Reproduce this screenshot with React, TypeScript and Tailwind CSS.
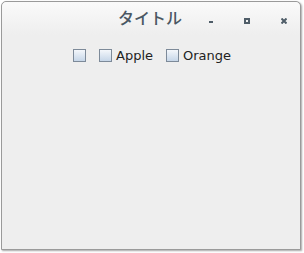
const ITEMS = ["", "Apple", "Orange"];

function Box({ label }: { label: string }) {
  return (
    <label className="flex items-center gap-[4px]">
      <span className="w-[13px] h-[13px] border border-[#7d8a99] bg-gradient-to-b from-[#f4f7fb] to-[#c6d6e8] shrink-0" />
      {label && (
        <span className="text-[13px] leading-none text-[#222]" style={{ fontFamily: "'DejaVu Sans', sans-serif" }}>
          {label}
        </span>
      )}
    </label>
  );
}

export default function App() {
  return (
    <div className="w-[304px] h-[253px] bg-white pt-[1px] pl-[1px]">
      <div className="w-[300px] h-[249px] flex flex-col rounded-t-[5px] border border-[#9a9a9a] bg-[#eeeeee] shadow-[1px_1px_2px_rgba(0,0,0,0.35)]">
        <div className="h-[33px] flex items-center rounded-t-[5px] bg-gradient-to-b from-[#fafafa] to-[#eeeeee] relative">
          <span
            className="absolute left-[116px] top-[7px] text-[16px] font-medium leading-none text-[#4a5763]"
            style={{ fontFamily: "'Noto Sans CJK JP', sans-serif" }}
          >
            タイトル
          </span>
          <span className="absolute left-[207px] top-[19px] w-[4px] h-[2px] bg-[#4f5d68]" />
          <span className="absolute left-[242px] top-[16px] w-[6px] h-[6px] border-2 border-[#4f5d68]" />
          <svg className="absolute left-[279px] top-[16px]" width="6" height="6" viewBox="0 0 6 6">
            <path d="M0.5 0.5 L5.5 5.5 M5.5 0.5 L0.5 5.5" stroke="#4f5d68" strokeWidth="2" />
          </svg>
        </div>
        <div className="flex gap-[13px] pt-[14px] pl-[71px]">
          {ITEMS.map((it, i) => (
            <Box key={i} label={it} />
          ))}
        </div>
      </div>
    </div>
  );
}
